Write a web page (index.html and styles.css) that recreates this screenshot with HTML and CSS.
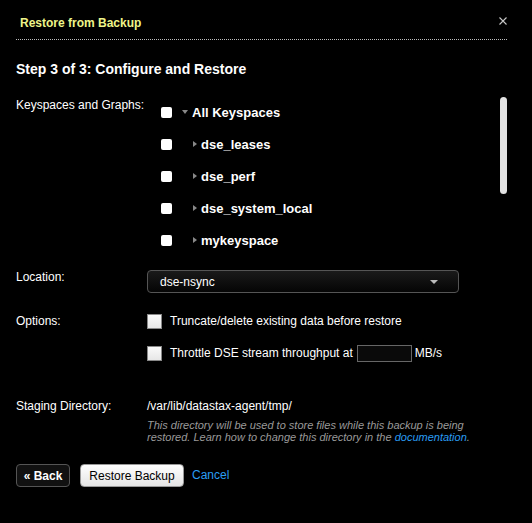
FILE: index.html
```html
<!DOCTYPE html>
<html>
<head>
<meta charset="utf-8">
<link rel="stylesheet" href="styles.css">
</head>
<body>
<div class="dialog">
  <div class="header">
    <span class="title">Restore from Backup</span>
    <svg class="close" width="8" height="8" viewBox="0 0 8 8"><path d="M0.5 0.5 L7.5 7.5 M7.5 0.5 L0.5 7.5" stroke="#c8c8c8" stroke-width="1.1" fill="none"/></svg>
  </div>
  <h2 class="step">Step 3 of 3: Configure and Restore</h2>

  <div class="row row-tree">
    <div class="label">Keyspaces and Graphs:</div>
    <div class="tree">
      <div class="node root"><span class="cb"></span><span class="tri down"></span><span class="name">All Keyspaces</span></div>
      <div class="node child"><span class="cb"></span><span class="tri right"></span><span class="name">dse_leases</span></div>
      <div class="node child"><span class="cb"></span><span class="tri right"></span><span class="name">dse_perf</span></div>
      <div class="node child"><span class="cb"></span><span class="tri right"></span><span class="name">dse_system_local</span></div>
      <div class="node child"><span class="cb"></span><span class="tri right"></span><span class="name">mykeyspace</span></div>
      <div class="thumb"></div>
    </div>
  </div>

  <div class="row row-loc">
    <div class="label">Location:</div>
    <div class="select"><span>dse-nsync</span><span class="caret"></span></div>
  </div>

  <div class="row row-opt">
    <div class="label">Options:</div>
    <div class="opts">
      <div class="opt"><span class="box"></span><span>Truncate/delete existing data before restore</span></div>
      <div class="opt"><span class="box"></span><span>Throttle DSE stream throughput at</span><span class="num"></span><span>MB/s</span></div>
    </div>
  </div>

  <div class="row row-stage">
    <div class="label">Staging Directory:</div>
    <div class="stage">
      <div class="path">/var/lib/datastax-agent/tmp/</div>
      <div class="help">This directory will be used to store files while this backup is being restored. Learn how to change this directory in the <a class="link">documentation</a>.</div>
    </div>
  </div>

  <div class="actions">
    <button class="btn back">« Back</button>
    <button class="btn primary">Restore Backup</button>
    <a class="cancel">Cancel</a>
  </div>
</div>
</body>
</html>
```

FILE: styles.css
```css
html, body {
  margin: 0;
  padding: 0;
  background: #000;
  width: 532px;
  height: 523px;
  overflow: hidden;
}
body {
  font-family: "Liberation Sans", Arial, Helvetica, sans-serif;
  color: #fff;
  font-size: 12px;
}
.dialog {
  padding: 0 25px 0 16px;
}
.header {
  height: 40px;
  display: flex;
  align-items: center;
  justify-content: space-between;
  border-bottom: 1px dotted #bbb;
  box-sizing: border-box;
}
.title {
  color: #eef58a;
  font-weight: bold;
  font-size: 12px;
  padding-left: 4px;
  margin-top: 6px;
}
.close {
  margin-right: 0;
  margin-top: 2px;
}
.step {
  font-size: 14px;
  font-weight: bold;
  margin: 21px 0 0 0;
  line-height: 16px;
}
.row {
  display: flex;
}
.label {
  width: 131px;
  flex: none;
}
.row-tree {
  margin-top: 19px;
  height: 160px;
}
.row-tree .label {
  padding-top: 2px;
}
.tree {
  position: relative;
  flex: 1;
  padding-left: 14px;
}
.node {
  height: 32px;
  display: flex;
  align-items: center;
  font-weight: bold;
  font-size: 13px;
}
.cb {
  width: 11px;
  height: 11px;
  background: #fff;
  border-radius: 2px;
  flex: none;
}
.tri {
  width: 0;
  height: 0;
  flex: none;
}
.tri.down {
  margin-left: 10px;
  border-left: 3px solid transparent;
  border-right: 3px solid transparent;
  border-top: 4px solid #888;
  margin-right: 4px;
}
.tri.right {
  margin-left: 21px;
  border-top: 3px solid transparent;
  border-bottom: 3px solid transparent;
  border-left: 4px solid #888;
  margin-right: 4px;
}
.thumb {
  position: absolute;
  right: 0;
  top: 1px;
  width: 7px;
  height: 97px;
  border-radius: 4px;
  background: #e2e2e2;
}
.row-loc {
  margin-top: 14px;
}
.select {
  width: 312px;
  height: 23px;
  border: 1px solid #555;
  border-radius: 4px;
  background: linear-gradient(#1a1a1a, #050505);
  display: flex;
  align-items: center;
  justify-content: space-between;
  padding: 0 20px 0 12px;
  box-sizing: border-box;
}
.caret {
  width: 0;
  height: 0;
  border-left: 4px solid transparent;
  border-right: 4px solid transparent;
  border-top: 4px solid #bbb;
}
.row-opt {
  margin-top: 20px;
}
.row-opt .label {
  padding-top: 1px;
}
.opts {
  display: flex;
  flex-direction: column;
  gap: 16px;
}
.opt {
  display: flex;
  align-items: center;
  height: 16px;
}
.box {
  width: 13px;
  height: 13px;
  background: linear-gradient(#fafafa, #e6e6e6);
  border: 1px solid #888;
  margin-right: 8px;
  flex: none;
}
.num {
  width: 53px;
  height: 15px;
  border: 1px solid #666;
  background: #0a0a0a;
  margin: 0 3px 0 4px;
}
.row-stage {
  margin-top: 38px;
}
.path {
  line-height: 14px;
}
.help {
  color: #9a9a9a;
  font-style: italic;
  font-size: 11px;
  line-height: 12px;
  margin-top: 6px;
  width: 330px;
}
.link {
  color: #2a9df4;
}
.actions {
  margin-top: 21px;
  display: flex;
  align-items: center;
}
.btn {
  font-family: "Liberation Sans", Arial, Helvetica, sans-serif;
  font-size: 12px;
  height: 23px;
  border-radius: 4px;
  cursor: pointer;
}
.back {
  background: #111;
  color: #fff;
  border: 1px solid #555;
  font-weight: bold;
  width: 54px;
  padding: 0;
}
.primary {
  margin-left: 10px;
  background: linear-gradient(#ffffff, #e4e4e4);
  color: #000;
  border: 1px solid #999;
  width: 104px;
  padding: 0;
}
.cancel {
  color: #2a9df4;
  margin-left: 8px;
  margin-top: -2px;
}
```
